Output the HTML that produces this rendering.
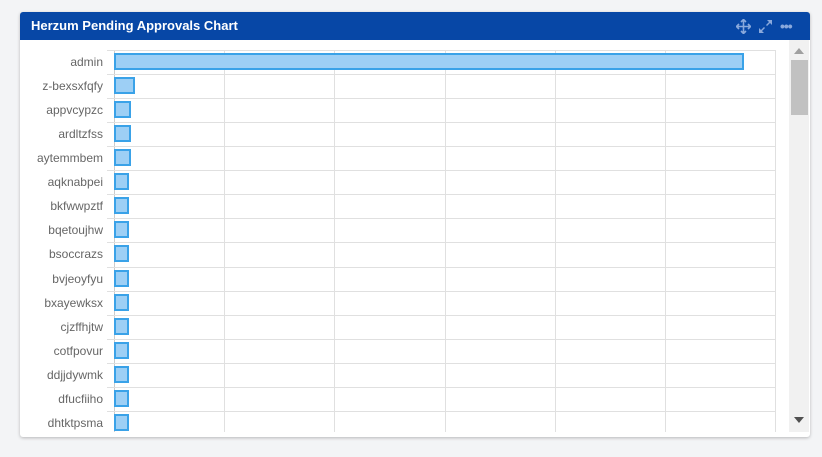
<!DOCTYPE html>
<html><head><meta charset="utf-8"><style>
body{margin:0;width:822px;height:457px;background:#f3f4f6;font-family:"Liberation Sans",sans-serif;position:relative;overflow:hidden}
.card{position:absolute;left:20px;top:12px;width:790px;height:425px;background:#fff;border-radius:3px;box-shadow:0 1px 3px rgba(0,0,0,.25);overflow:hidden}
.hd{position:absolute;left:0;top:0;width:790px;height:28px;background:#0747a6;color:#fff;font-weight:bold;font-size:13px;line-height:28px;padding-left:11px;box-sizing:border-box}
.h{position:absolute;left:87px;width:668px;height:1px;background:#e0e0e0}
.v{position:absolute;top:38px;width:1px;height:382px;background:#e0e0e0}
.l{position:absolute;right:707px;font-size:12px;color:#666;line-height:14px;white-space:nowrap}
.b{position:absolute;left:94px;height:13px;background:#9dcff5;border:2px solid #3aa2e8}
.sb{position:absolute;left:769px;top:28px;width:20px;height:392px;background:#f1f1f1}
</style></head><body>
<div class="card">
<div class="hd">Herzum Pending Approvals Chart
<svg style="position:absolute;left:716px;top:7px" width="15" height="15" viewBox="0 0 15 15" fill="none" stroke="#8aa9dc" stroke-width="1.6"><path d="M7.5 1v13M1 7.5h13M5 3l2.5-2.5L10 3M5 12l2.5 2.5L10 12M3 5L.5 7.5 3 10M12 5l2.5 2.5L12 10"/></svg>
<svg style="position:absolute;left:738px;top:7px" width="15" height="15" viewBox="0 0 15 15" fill="#8aa9dc"><path d="M9 1h5v5l-2-2-3 3-1-1 3-3zM6 14H1V9l2 2 3-3 1 1-3 3z"/></svg>
<span style="position:absolute;left:760px;top:0;color:#8aa9dc;font-size:14px;letter-spacing:-1px">•••</span>
</div>
<div class="v" style="left:94px;background:#ccc"></div>
<div class="v" style="left:204px"></div><div class="v" style="left:314px"></div><div class="v" style="left:425px"></div><div class="v" style="left:535px"></div><div class="v" style="left:645px"></div><div class="v" style="left:755px"></div>

<div class="h" style="top:38px"></div><div class="h" style="top:62px"></div><div class="h" style="top:86px"></div><div class="h" style="top:110px"></div><div class="h" style="top:134px"></div><div class="h" style="top:158px"></div><div class="h" style="top:182px"></div><div class="h" style="top:206px"></div><div class="h" style="top:230px"></div><div class="h" style="top:255px"></div><div class="h" style="top:279px"></div><div class="h" style="top:303px"></div><div class="h" style="top:327px"></div><div class="h" style="top:351px"></div><div class="h" style="top:375px"></div><div class="h" style="top:399px"></div>

<div class="l" style="top:43px">admin</div><div class="b" style="top:41px;width:626px"></div>
<div class="l" style="top:67px">z-bexsxfqfy</div><div class="b" style="top:65px;width:17px"></div>
<div class="l" style="top:91px">appvcypzc</div><div class="b" style="top:89px;width:13px"></div>
<div class="l" style="top:115px">ardltzfss</div><div class="b" style="top:113px;width:13px"></div>
<div class="l" style="top:139px">aytemmbem</div><div class="b" style="top:137px;width:13px"></div>
<div class="l" style="top:163px">aqknabpei</div><div class="b" style="top:161px;width:11px"></div>
<div class="l" style="top:187px">bkfwwpztf</div><div class="b" style="top:185px;width:11px"></div>
<div class="l" style="top:211px">bqetoujhw</div><div class="b" style="top:209px;width:11px"></div>
<div class="l" style="top:235px">bsoccrazs</div><div class="b" style="top:233px;width:11px"></div>
<div class="l" style="top:260px">bvjeoyfyu</div><div class="b" style="top:258px;width:11px"></div>
<div class="l" style="top:284px">bxayewksx</div><div class="b" style="top:282px;width:11px"></div>
<div class="l" style="top:308px">cjzffhjtw</div><div class="b" style="top:306px;width:11px"></div>
<div class="l" style="top:332px">cotfpovur</div><div class="b" style="top:330px;width:11px"></div>
<div class="l" style="top:356px">ddjjdywmk</div><div class="b" style="top:354px;width:11px"></div>
<div class="l" style="top:380px">dfucfiiho</div><div class="b" style="top:378px;width:11px"></div>
<div class="l" style="top:404px">dhtktpsma</div><div class="b" style="top:402px;width:11px"></div>

<div class="sb">
<div style="position:absolute;left:5px;top:8px;width:0;height:0;border-left:5px solid transparent;border-right:5px solid transparent;border-bottom:6px solid #a0a0a0"></div>
<div style="position:absolute;left:2px;top:20px;width:17px;height:55px;background:#c1c1c1"></div>
<div style="position:absolute;left:5px;top:377px;width:0;height:0;border-left:5px solid transparent;border-right:5px solid transparent;border-top:6px solid #505050"></div>
</div>
</div>
</body></html>
